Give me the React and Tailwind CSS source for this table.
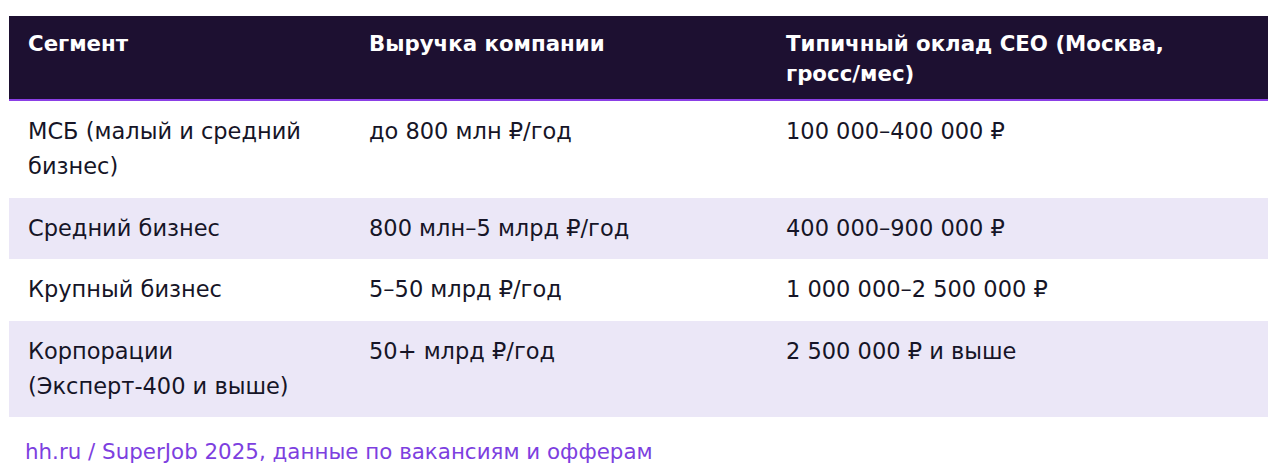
import React from 'react';

const ROWS = [
  { segment: 'МСБ (малый и средний бизнес)', revenue: 'до 800 млн ₽/год', salary: '100 000–400 000 ₽' },
  { segment: 'Средний бизнес', revenue: '800 млн–5 млрд ₽/год', salary: '400 000–900 000 ₽' },
  { segment: 'Крупный бизнес', revenue: '5–50 млрд ₽/год', salary: '1 000 000–2 500 000 ₽' },
  { segment: 'Корпорации (Эксперт-400 и выше)', revenue: '50+ млрд ₽/год', salary: '2 500 000 ₽ и выше' },
];

const App = () => {
  return (
    <div className="bg-white w-[1280px] h-[468px] pl-[9px] pr-[12px] pt-[16px] font-['DejaVu_Sans',sans-serif]">
      <table className="w-full border-collapse text-[22.5px] text-[#161527]">
        <thead>
          <tr className="bg-[#1d1031] text-white border-b-2 border-[#8b3fe6] text-[21.3px]">
            <th className="w-[341px] text-left align-top font-bold leading-[30px] pl-[19px] pr-4 pt-[13px] pb-[10px]">Сегмент</th>
            <th className="w-[417px] text-left align-top font-bold leading-[30px] pl-[19px] pr-4 pt-[13px] pb-[10px]">Выручка компании</th>
            <th className="text-left align-top font-bold leading-[30px] pl-[19px] pr-4 pt-[13px] pb-[10px]">
              Типичный оклад CEO (Москва, <span className="whitespace-nowrap">гросс/мес)</span>
            </th>
          </tr>
        </thead>
        <tbody>
          {ROWS.map((row, i) => (
            <tr key={row.segment} className={i % 2 === 1 ? 'bg-[#ebe7f7]' : 'bg-white'}>
              <td className="align-top leading-[35px] pl-[19px] pr-4 pt-[13px] pb-[13.5px]">{row.segment}</td>
              <td className="align-top leading-[35px] pl-[19px] pr-4 pt-[13px] pb-[13.5px]">{row.revenue}</td>
              <td className="align-top leading-[35px] pl-[19px] pr-4 pt-[13px] pb-[13.5px]">{row.salary}</td>
            </tr>
          ))}
        </tbody>
      </table>

      {/* Source */}
      <p className="mt-[20px] pl-[16px] text-[21.4px] leading-[30px] text-[#7d3fe0]">
        hh.ru / SuperJob 2025, данные по вакансиям и офферам
      </p>
    </div>
  );
};

export default App;
